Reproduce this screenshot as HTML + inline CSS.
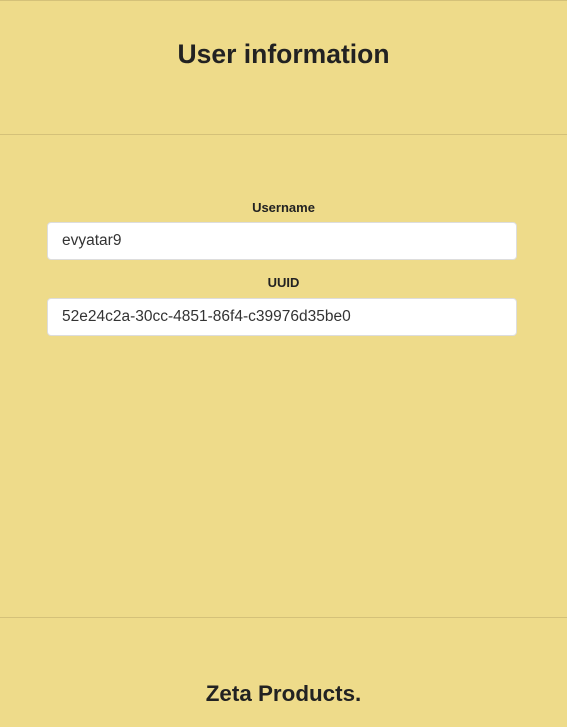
<!DOCTYPE html>
<html><head><meta charset="utf-8"><style>
html,body{margin:0;padding:0;}
body{width:567px;height:727px;background:#eedb8a;font-family:"Liberation Sans",sans-serif;color:#222;position:relative;overflow:hidden;}
.line{position:absolute;left:0;width:567px;height:1px;background:#d4c179;}
h1{position:absolute;top:37px;left:0;width:567px;text-align:center;margin:0;font-size:26.5px;font-weight:bold;color:#222;line-height:34px;}
.lbl{position:absolute;left:0;width:567px;text-align:center;font-size:13px;font-weight:bold;color:#222;}
.inp{position:absolute;left:47px;width:454px;height:36px;background:#fff;border:1px solid #ddd;border-radius:4px;font-size:15.5px;line-height:36px;padding-left:14px;box-sizing:content-box;color:#333;}
.foot{position:absolute;top:679px;left:0;width:567px;text-align:center;font-size:22.4px;font-weight:bold;line-height:30px;}
</style></head><body>
<div class="line" style="top:0"></div>
<h1>User information</h1>
<div class="line" style="top:134px"></div>
<div class="lbl" style="top:200px">Username</div>
<div class="inp" style="top:222px">evyatar9</div>
<div class="lbl" style="top:275px">UUID</div>
<div class="inp" style="top:298px">52e24c2a-30cc-4851-86f4-c39976d35be0</div>
<div class="line" style="top:617px"></div>
<div class="foot">Zeta Products.</div>
</body></html>
